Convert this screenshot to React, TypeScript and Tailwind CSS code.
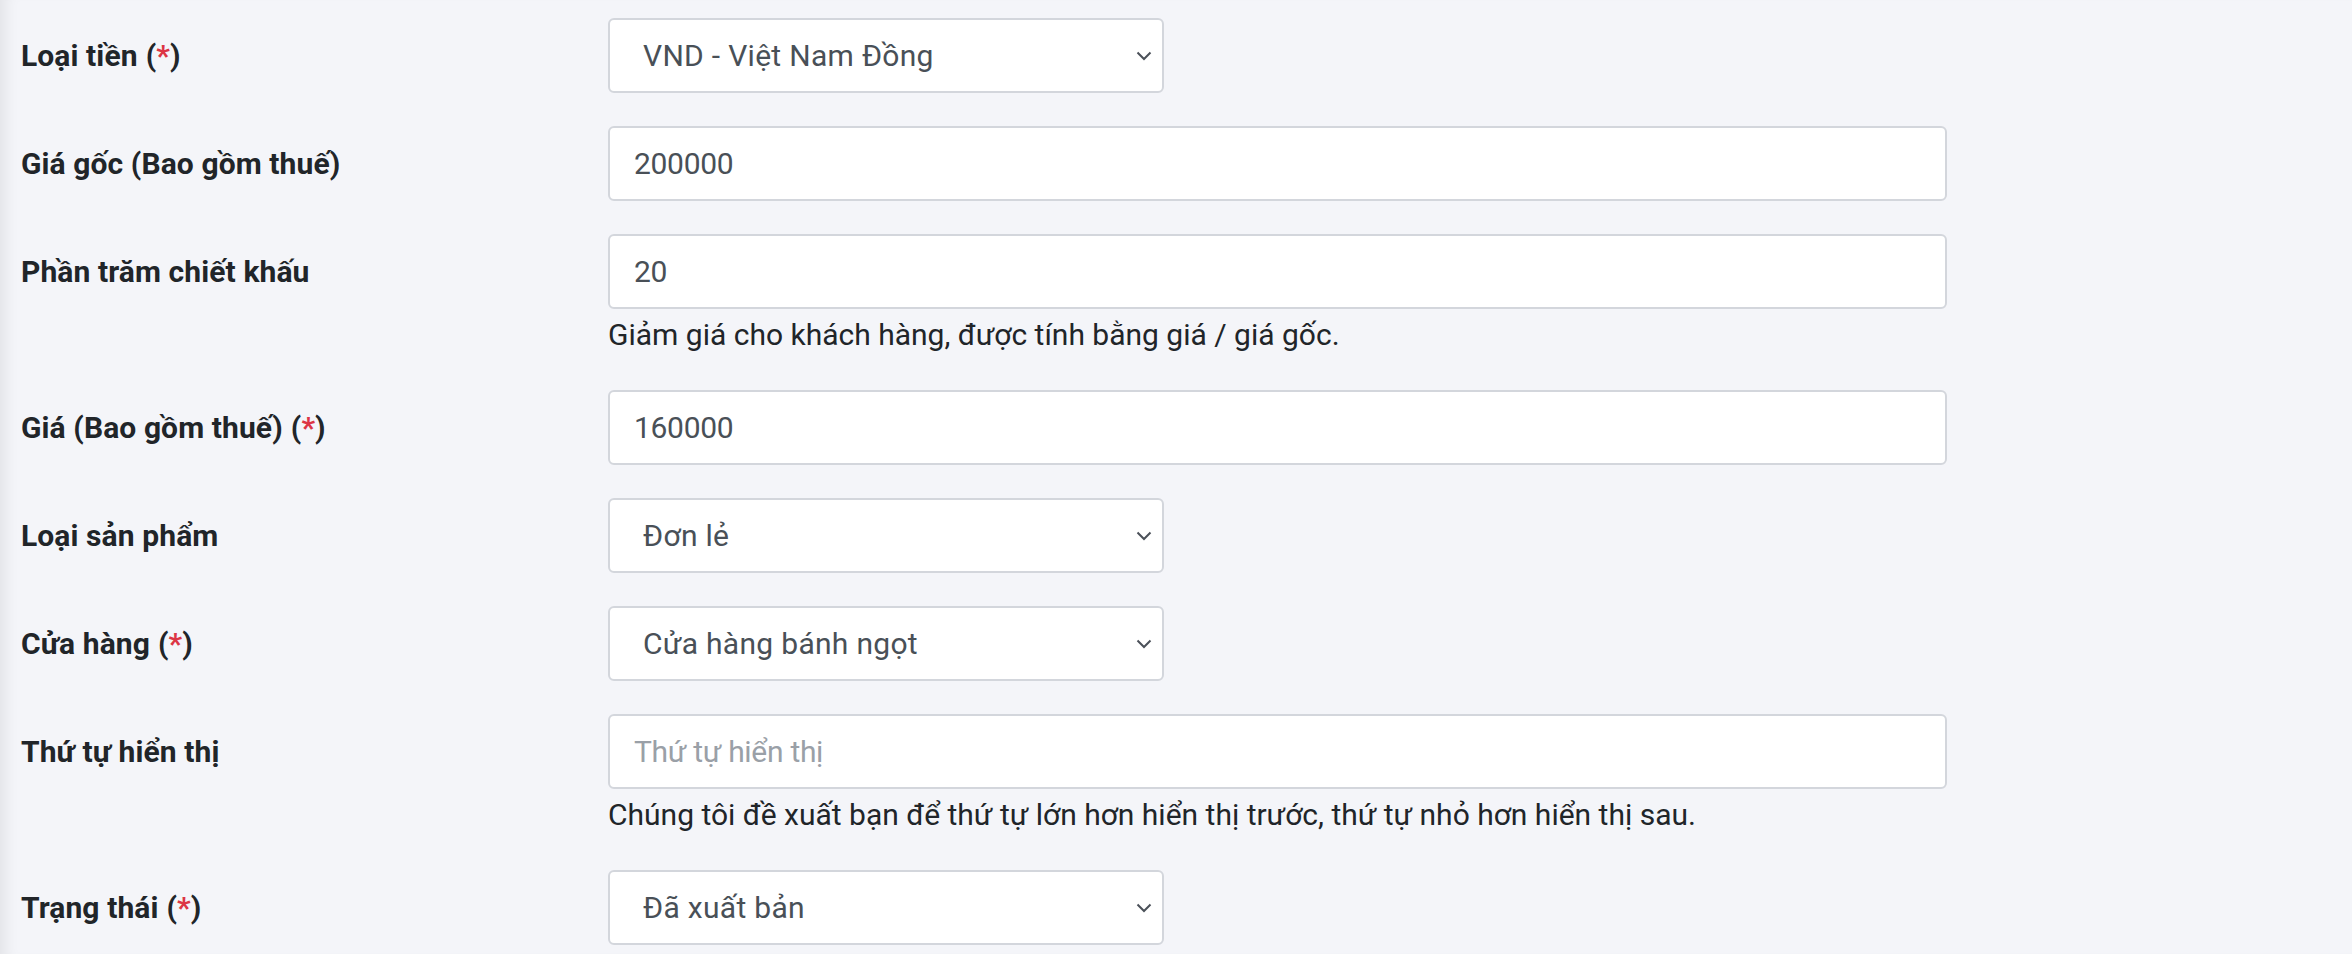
import { ReactNode } from 'react';

const font = { fontFamily: 'Roboto, "Noto Sans", sans-serif' };

function Chevron() {
  return (
    <svg
      className="pointer-events-none absolute right-[12px] top-1/2 -translate-y-1/2"
      width="16"
      height="10"
      viewBox="0 0 16 10"
      fill="none"
    >
      <path d="M1.5 1.5L8 8L14.5 1.5" stroke="#4b5159" strokeWidth="2" />
    </svg>
  );
}

function Label({ text, required }: { text: string; required?: boolean }) {
  return (
    <div className="w-[587px] shrink-0 flex items-center h-[75px] text-[30px] font-bold text-[#212529] tracking-[0.1px]">
      {text}
      {required && (
        <span className="ml-[8px]">
          (<span className="text-[#dc3545]">*</span>)
        </span>
      )}
    </div>
  );
}

function Row({ label, required, children, help }: { label: string; required?: boolean; children: ReactNode; help?: string }) {
  return (
    <div className="flex mb-[33px]">
      <Label text={label} required={required} />
      <div className="flex flex-col">
        {children}
        {help && (
          <div className="mt-[3px] text-[30px] leading-[45px] text-[#212529]">{help}</div>
        )}
      </div>
    </div>
  );
}

function Select({ value, options }: { value: string; options: string[] }) {
  return (
    <div className="relative w-[556px] h-[75px]">
      <select
        defaultValue={value}
        className="w-full h-full appearance-none bg-white border-2 border-[#d3d6dc] rounded-[6px] pl-[33px] pr-[40px] text-[30px] text-[#495057] tracking-[0.3px] outline-none"
        style={font}
      >
        {options.map((o) => (
          <option key={o}>{o}</option>
        ))}
      </select>
      <Chevron />
    </div>
  );
}

function TextInput({ value, placeholder }: { value?: string; placeholder?: string }) {
  return (
    <input
      defaultValue={value}
      placeholder={placeholder}
      className="w-[1339px] h-[75px] bg-white border-2 border-[#d3d6dc] rounded-[6px] px-[24px] text-[30px] text-[#495057] tracking-[-0.3px] placeholder:text-[#9aa0a7] outline-none"
      style={font}
    />
  );
}

export default function App() {
  return (
    <div
      className="min-h-[954px] w-full bg-[#f4f5f9] pl-[21px] pt-[18px] shadow-[inset_16px_0_14px_-10px_rgba(0,0,0,0.07)]"
      style={font}
    >
      <Row label="Loại tiền" required>
        <Select value="VND - Việt Nam Đồng" options={['VND - Việt Nam Đồng', 'USD - Đô la Mỹ']} />
      </Row>
      <Row label="Giá gốc (Bao gồm thuế)">
        <TextInput value="200000" />
      </Row>
      <Row label="Phần trăm chiết khấu" help="Giảm giá cho khách hàng, được tính bằng giá / giá gốc.">
        <TextInput value="20" />
      </Row>
      <Row label="Giá (Bao gồm thuế)" required>
        <TextInput value="160000" />
      </Row>
      <Row label="Loại sản phẩm">
        <Select value="Đơn lẻ" options={['Đơn lẻ', 'Combo']} />
      </Row>
      <Row label="Cửa hàng" required>
        <Select value="Cửa hàng bánh ngọt" options={['Cửa hàng bánh ngọt']} />
      </Row>
      <Row
        label="Thứ tự hiển thị"
        help="Chúng tôi đề xuất bạn để thứ tự lớn hơn hiển thị trước, thứ tự nhỏ hơn hiển thị sau."
      >
        <TextInput placeholder="Thứ tự hiển thị" />
      </Row>
      <Row label="Trạng thái" required>
        <Select value="Đã xuất bản" options={['Đã xuất bản', 'Bản nháp']} />
      </Row>
    </div>
  );
}
